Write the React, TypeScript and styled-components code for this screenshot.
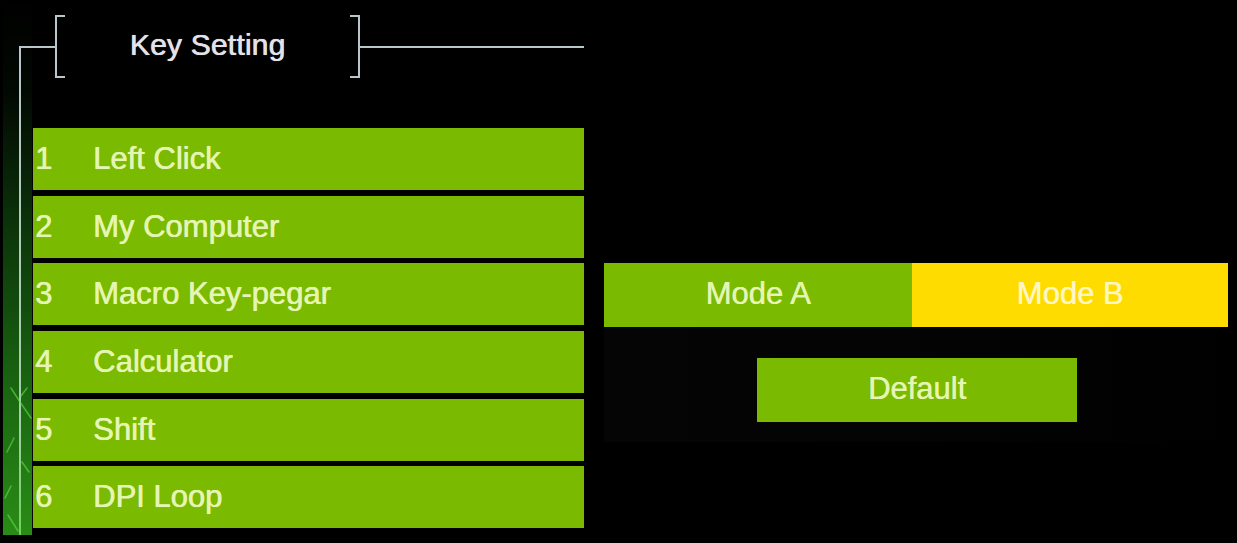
import React from "react";
import styled, { createGlobalStyle } from "styled-components";

const GlobalStyle = createGlobalStyle`
  html, body { margin: 0; padding: 0; background: #000; }
  body { font-family: "Liberation Sans", Arial, sans-serif; }
`;

const GREEN = "#7aba00";
const TEXT = "#e4f5b4";
const LINE = "#b9c6cc";

const Page = styled.div`
  width: 1237px;
  height: 543px;
  display: flex;
  background: #000;
  overflow: hidden;
`;

const KeyPanel = styled.section`
  position: relative;
  width: 584px;
  height: 543px;
  flex: none;
  display: flex;
  flex-direction: column;
  background:
    linear-gradient(to bottom, transparent 0, transparent 46px, ${LINE} 46px, #a4cfa6 80%, #70d05c 100%) 19px 0 / 2px 535px no-repeat,
    linear-gradient(to bottom, #000 0, #020802 90px, #0b320a 220px, #1a6611 390px, #2a8c17 535px) 3px 0 / 29px 535px no-repeat,
    #000;
`;

const RailArt = styled.svg`
  position: absolute;
  left: 3px;
  top: 0;
  width: 30px;
  height: 535px;
  pointer-events: none;
`;

const Header = styled.header`
  height: 128px;
  flex: none;
  display: flex;
  align-items: flex-start;
  padding-top: 15px;
  box-sizing: border-box;
  padding-left: 19px;
  position: relative;
`;

const Rule = styled.div<{ $width?: number }>`
  height: 2px;
  margin-top: 31px;
  background: ${LINE};
  ${(p) => (p.$width ? `width: ${p.$width}px; flex: none;` : "flex: 1;")}
`;

const Bracket = styled.div<{ $side: "left" | "right" }>`
  width: 8px;
  height: 59px;
  flex: none;
  border: 2px solid ${LINE};
  ${(p) => (p.$side === "left" ? "border-right: none;" : "border-left: none;")}
`;

const Title = styled.h1`
  margin: 0;
  width: 285px;
  height: 61px;
  flex: none;
  display: flex;
  align-items: center;
  justify-content: center;
  font-size: 30px;
  font-weight: 400;
  color: #e2e2ea;
  letter-spacing: 0.2px;
  text-shadow: 0.5px 0 0 #e2e2ea, 0 0 1px rgba(220, 221, 230, 0.6);
  padding-bottom: 2px;
  box-sizing: border-box;
`;

const KeyList = styled.ol`
  list-style: none;
  margin: 0;
  padding: 0 0 0 33px;
  display: flex;
  flex-direction: column;
  gap: 5.7px;
  position: relative;
`;

const KeyRow = styled.li`
  height: 62px;
  display: flex;
  align-items: center;
  background: ${GREEN};
  color: ${TEXT};
  font-size: 31px;
  text-shadow: 0.5px 0 0 ${TEXT}, 0 0 1px rgba(228, 245, 180, 0.5);
`;

const KeyNum = styled.span`
  width: 60px;
  flex: none;
  padding-left: 2px;
  box-sizing: border-box;
`;

const KeyLabel = styled.span`
  white-space: nowrap;
`;

const ControlPanel = styled.section`
  margin-left: 20px;
  width: 624px;
  flex: none;
  padding-top: 263px;
  display: flex;
  flex-direction: column;
`;

const ModeBar = styled.div`
  height: 64px;
  display: flex;
`;

const ModeButton = styled.button<{ $active?: boolean; $width?: number }>`
  border: none;
  margin: 0;
  padding: 0 0 2px;
  height: 100%;
  ${(p) => (p.$width ? `width: ${p.$width}px; flex: none;` : "flex: 1;")}
  background: ${(p) => (p.$active ? "#ffdc00" : GREEN)};
  color: ${(p) => (p.$active ? "#fff6c4" : TEXT)};
  font-family: "Liberation Sans", Arial, sans-serif;
  font-size: 31px;
  text-shadow: 0.5px 0 0 ${(p) => (p.$active ? "#fff6c4" : TEXT)};
  cursor: pointer;
`;

const ActionArea = styled.div`
  height: 115px;
  display: flex;
  align-items: flex-start;
  padding-top: 31px;
  padding-left: 153px;
  box-sizing: border-box;
  background: linear-gradient(to right, #040504 0, #030303 60%, #000 100%);
`;

const DefaultButton = styled.button`
  width: 320px;
  height: 64px;
  border: none;
  margin: 0;
  padding: 0 0 2px;
  background: ${GREEN};
  color: ${TEXT};
  font-family: "Liberation Sans", Arial, sans-serif;
  font-size: 31px;
  text-shadow: 0.5px 0 0 ${TEXT};
  cursor: pointer;
`;

const keys = [
  "Left Click",
  "My Computer",
  "Macro Key-pegar",
  "Calculator",
  "Shift",
  "DPI Loop",
];

export default function App() {
  return (
    <>
      <GlobalStyle />
      <Page>
        <KeyPanel>
          <RailArt viewBox="0 0 30 535" aria-hidden="true">
            <g stroke="#5fe04a" strokeWidth="1.6" strokeLinecap="round" fill="none" opacity="0.6">
              <path d="M8 388 L17 402 L28 418" />
              <path d="M18 396 L24 388" />
              <path d="M4 452 L11 438" />
              <path d="M2 498 L8 486" />
              <path d="M5 515 L15 531" />
              <path d="M19 462 L26 472" />
            </g>
          </RailArt>
          <Header>
            <Rule $width={36} />
            <Bracket $side="left" />
            <Title>Key Setting</Title>
            <Bracket $side="right" />
            <Rule />
          </Header>
          <KeyList>
            {keys.map((k, i) => (
              <KeyRow key={k}>
                <KeyNum>{i + 1}</KeyNum>
                <KeyLabel>{k}</KeyLabel>
              </KeyRow>
            ))}
          </KeyList>
        </KeyPanel>
        <ControlPanel>
          <ModeBar>
            <ModeButton $width={308}>Mode A</ModeButton>
            <ModeButton $active>Mode B</ModeButton>
          </ModeBar>
          <ActionArea>
            <DefaultButton>Default</DefaultButton>
          </ActionArea>
        </ControlPanel>
      </Page>
    </>
  );
}
